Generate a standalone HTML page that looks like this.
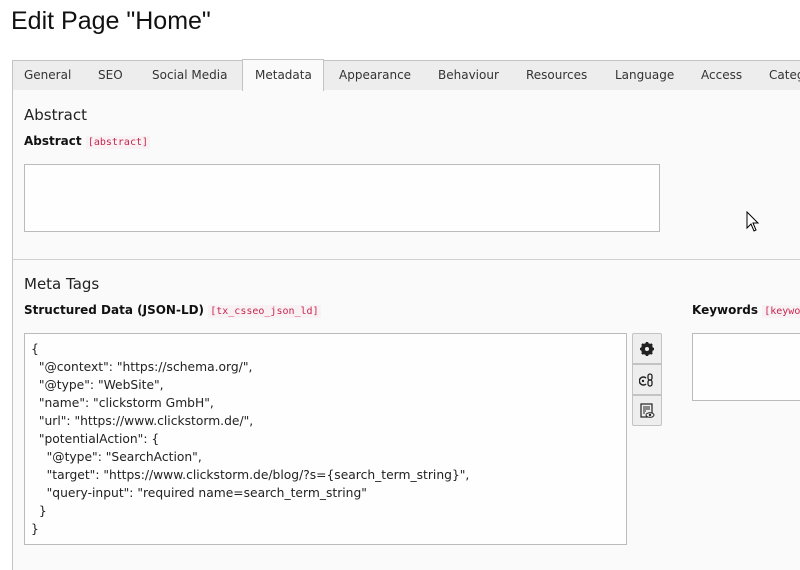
<!DOCTYPE html>
<html><head><meta charset="utf-8"><style>
*{margin:0;padding:0;box-sizing:border-box}
body{width:800px;height:560px;overflow:hidden;background:#fff;font-family:"DejaVu Sans","Liberation Sans",sans-serif;color:#1a1a1a;position:relative}
.a{position:absolute;white-space:nowrap}
h1{position:absolute;left:11px;top:7px;font:400 25px "Liberation Sans",sans-serif;color:#111}
.tabs{position:absolute;left:12px;top:60px;width:800px;height:31px;background:#ededed;border:1px solid #c3c3c3;border-right:none}
.tab{position:absolute;top:68px;font-size:12px;color:#333}
.active{position:absolute;left:242px;top:59px;width:82px;height:32px;background:#fafafa;border:1px solid #c3c3c3;border-bottom:none}
.content{position:absolute;left:12px;top:90px;width:800px;height:480px;background:#fafafa;border-left:1px solid #c3c3c3}
.sec{font-size:15px;color:#222}
.lbl{font-size:12px;font-weight:bold;color:#111}
.code{font-family:"DejaVu Sans Mono","Liberation Mono",monospace;font-size:10px;color:#c7254e;background:#f9f2f4;padding:1px 2px}
.box{position:absolute;background:#fefefe;border:1px solid #bbb}
.pre{position:absolute;left:31px;top:340px;font-size:12.3px;line-height:18px;white-space:pre;color:#222}
.btn{position:absolute;left:632px;width:30px;height:31px;background:#eee;border:1px solid #c3c3c3;display:flex;align-items:center;justify-content:center}
</style></head><body>
<h1>Edit Page "Home"</h1>
<div class="tabs"></div>
<div class="content"></div>
<div class="active"></div>
<span class="a tab" style="left:24px">General</span>
<span class="a tab" style="left:98px">SEO</span>
<span class="a tab" style="left:152px">Social Media</span>
<span class="a tab" style="left:255px">Metadata</span>
<span class="a tab" style="left:339px">Appearance</span>
<span class="a tab" style="left:438px">Behaviour</span>
<span class="a tab" style="left:526px">Resources</span>
<span class="a tab" style="left:615px">Language</span>
<span class="a tab" style="left:701px">Access</span>
<span class="a tab" style="left:769px">Categ</span>
<span class="a sec" style="left:24px;top:106px">Abstract</span>
<span class="a lbl" style="left:24px;top:134px">Abstract <span class="code" style="font-weight:normal">[abstract]</span></span>
<div class="box" style="left:24px;top:164px;width:636px;height:68px"></div>
<svg class="a" style="left:746px;top:211px" width="14" height="22" viewBox="0 0 14 22"><path d="M1 1 L1 17 L5 13 L8 20 L10 19 L7 12 L12 12 Z" fill="#fff" stroke="#000" stroke-width="1"/></svg>
<div class="a" style="left:12px;top:259px;width:788px;height:1px;background:#d0d0d0"></div>
<span class="a sec" style="left:24px;top:275px">Meta Tags</span>
<span class="a lbl" style="left:24px;top:303px">Structured Data (JSON-LD) <span class="code" style="font-weight:normal">[tx_csseo_json_ld]</span></span>
<span class="a lbl" style="left:692px;top:303px">Keywords <span class="code" style="font-weight:normal">[keywords]</span></span>
<div class="box" style="left:24px;top:333px;width:603px;height:212px"></div>
<div class="pre">{
  "@context": "https://schema.org/",
  "@type": "WebSite",
  "name": "clickstorm GmbH",
  "url": "https://www.clickstorm.de/",
  "potentialAction": {
    "@type": "SearchAction",
    "target": "https://www.clickstorm.de/blog/?s={search_term_string}",
    "query-input": "required name=search_term_string"
  }
}</div>
<div class="btn" style="top:333px;border-radius:2px 2px 0 0"><svg width="14" height="14" viewBox="0 0 14 14"><circle cx="7" cy="7" r="4.5" fill="none" stroke="#222" stroke-width="3"/><g stroke="#222" stroke-width="2.5"><path d="M7 0v14M0 7h14M2 2l10 10M12 2L2 12"/></g><circle cx="7" cy="7" r="2" fill="#eee"/></svg></div>
<div class="btn" style="top:364px"><svg width="16" height="16" viewBox="0 0 16 16"><path d="M7 6 A4 4 0 1 0 7 12" fill="none" stroke="#222" stroke-width="1.5"/><circle cx="4" cy="9" r="1.2" fill="#222"/><rect x="9" y="2" width="4" height="6" rx="2" fill="none" stroke="#222" stroke-width="1.3"/><rect x="9" y="8" width="4" height="6" rx="2" fill="none" stroke="#222" stroke-width="1.3"/></svg></div>
<div class="btn" style="top:395px;border-radius:0 0 2px 2px"><svg width="16" height="16" viewBox="0 0 16 16"><rect x="2" y="1" width="11" height="13" fill="none" stroke="#222" stroke-width="1.2"/><path d="M4 4h7M4 6h7M4 8h3M4 10h2" stroke="#222"/><ellipse cx="11" cy="12" rx="4" ry="2.3" fill="#eee" stroke="#222"/><circle cx="11" cy="12" r="1.2" fill="#222"/></svg></div>
<div class="box" style="left:692px;top:333px;width:120px;height:68px"></div>
</body></html>
